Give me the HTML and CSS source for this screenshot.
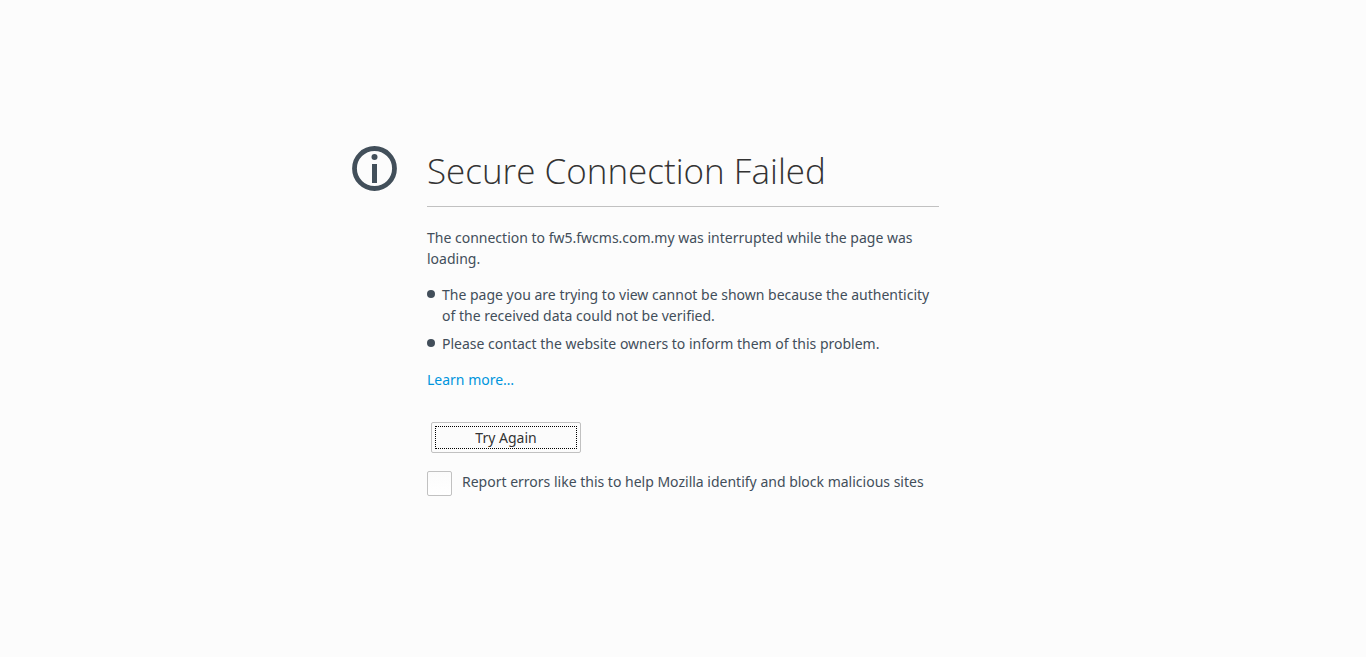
FILE: index.html
```html
<!DOCTYPE html>
<html lang="en">
<head>
<meta charset="utf-8">
<meta name="viewport" content="width=device-width, initial-scale=1">
<title>Secure Connection Failed</title>
<link rel="stylesheet" href="styles.css">
</head>
<body>
<main class="error-page">
  <svg class="info-icon" viewBox="0 0 45 45" aria-hidden="true">
    <circle cx="22.5" cy="22.5" r="20" fill="none" stroke="#424f5a" stroke-width="4.8"/>
    <circle cx="22.5" cy="11" r="3" fill="#424f5a"/>
    <path d="M20 18h5v19h-5z" fill="#424f5a"/>
  </svg>
  <div class="content">
    <h1 class="title">Secure Connection Failed</h1>
    <p class="summary">The connection to fw5.fwcms.com.my was interrupted while the page was loading.</p>
    <ul class="details">
      <li>The page you are trying to view cannot be shown because the authenticity of the received data could not be verified.</li>
      <li>Please contact the website owners to inform them of this problem.</li>
    </ul>
    <a class="learn-more" href="#">Learn more…</a>
    <button class="retry" type="button"><span class="retry-label">Try Again</span></button>
    <div class="report">
      <input class="report-box" type="checkbox" id="report">
      <label class="report-label" for="report">Report errors like this to help Mozilla identify and block malicious sites</label>
    </div>
  </div>
</main>
</body>
</html>
```

FILE: styles.css
```css
* {
  box-sizing: border-box;
}

body {
  margin: 0;
  min-height: 100vh;
  padding: 0 48px;
  display: flex;
  align-items: center;
  justify-content: center;
  background: #fcfcfc;
  color: #424e5a;
  font: 14px/21px "Noto Sans", "Open Sans", sans-serif;
}

.error-page {
  display: flex;
  gap: 30px;
  width: 100%;
  max-width: 662px;
  padding: 0 75px 15px 0;
}

.info-icon {
  flex: none;
  width: 45px;
  height: 45px;
}

.content {
  flex: 1;
  min-width: 0;
}

.title {
  margin: 0 0 20px;
  padding-bottom: 10px;
  border-bottom: 1px solid #c1c1c1;
  color: #333;
  font-family: "Open Sans", "Noto Sans", sans-serif;
  font-size: 35px;
  font-weight: 300;
  line-height: 50px;
}

.summary {
  margin: 0 0 15px;
}

.details {
  margin: 0 0 15px;
  padding: 0;
  list-style: none;
}

.details li {
  position: relative;
  padding-left: 15px;
}

.details li + li {
  margin-top: 7px;
}

.details li::before {
  content: "";
  position: absolute;
  top: 6px;
  left: 0;
  width: 8px;
  height: 8px;
  border-radius: 50%;
  background: #424e5a;
}

.learn-more {
  display: block;
  width: fit-content;
  color: #0095dd;
  text-decoration: none;
}

.retry {
  display: block;
  width: 150px;
  height: 31px;
  margin: 32px 4px 18px;
  padding: 3px;
  border: 1px solid #c1c1c1;
  border-radius: 2px;
  background: #fbfbfb;
  color: #333;
  font: inherit;
}

.retry-label {
  display: block;
  height: 23px;
  border: 1px dotted #000;
}

.report {
  display: flex;
  align-items: flex-start;
  gap: 10px;
}

.report-box {
  appearance: none;
  flex: none;
  width: 25px;
  height: 25px;
  margin: 0;
  border: 1px solid #c1c1c1;
  border-radius: 2px;
  background: linear-gradient(#fbfbfb, #fff);
}
```
